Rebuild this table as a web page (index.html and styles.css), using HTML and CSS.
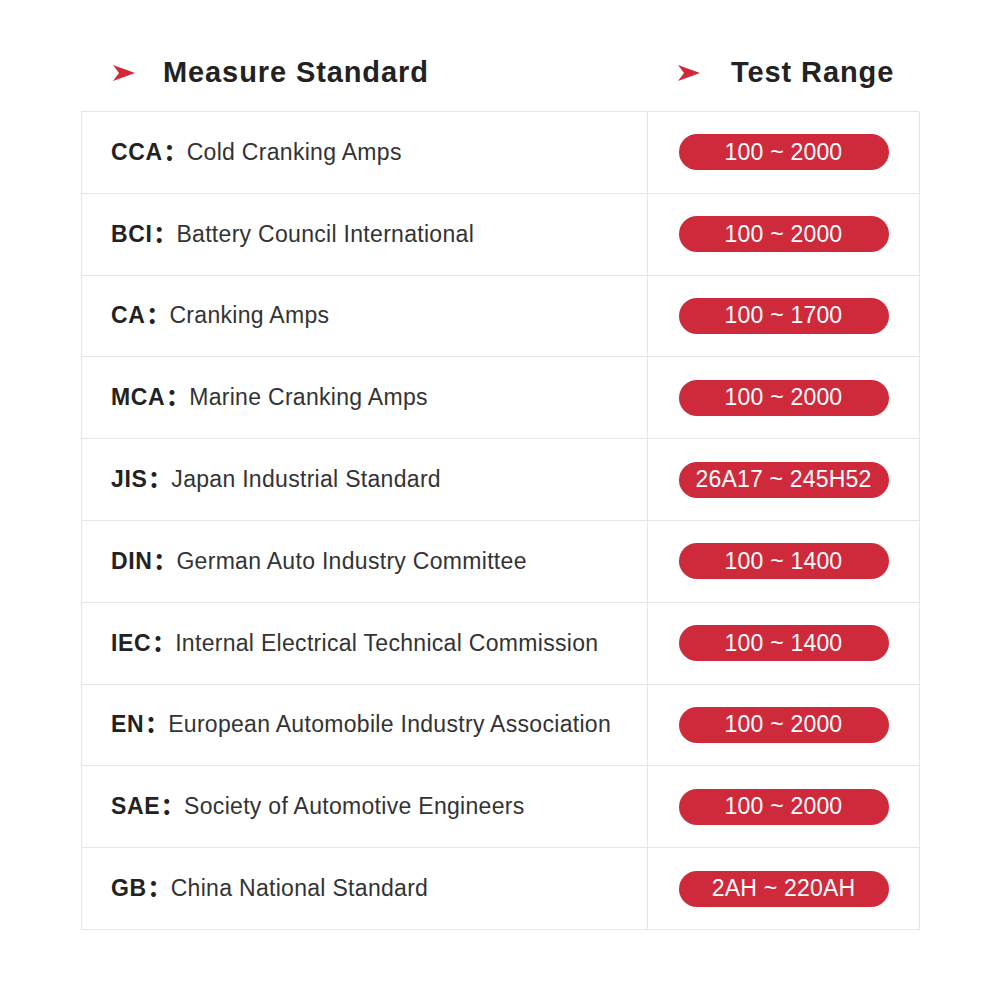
FILE: index.html
```html
<!DOCTYPE html>
<html>
<head>
<meta charset="utf-8">
<link rel="stylesheet" href="styles.css">
</head>
<body>
<div class="wrap">
  <div class="head">
    <div class="hcell hleft">
      <svg class="arrow" width="22" height="16" viewBox="0 0 22 16"><polygon points="0,0 22,8 0,16 6,8" fill="#d3283a"/></svg>
      <span class="htext">Measure Standard</span>
    </div>
    <div class="hcell hright">
      <svg class="arrow" width="22" height="16" viewBox="0 0 22 16"><polygon points="0,0 22,8 0,16 6,8" fill="#d3283a"/></svg>
      <span class="htext">Test Range</span>
    </div>
  </div>
  <div class="table">
    <div class="cell name"><span class="lbl"><b>CCA<i>：</i></b>Cold Cranking Amps</span></div><div class="cell range"><span class="pill">100 ~ 2000</span></div>
    <div class="cell name"><span class="lbl"><b>BCI<i>：</i></b>Battery Council International</span></div><div class="cell range"><span class="pill">100 ~ 2000</span></div>
    <div class="cell name"><span class="lbl"><b>CA<i>：</i></b>Cranking Amps</span></div><div class="cell range"><span class="pill">100 ~ 1700</span></div>
    <div class="cell name"><span class="lbl"><b>MCA<i>：</i></b>Marine Cranking Amps</span></div><div class="cell range"><span class="pill">100 ~ 2000</span></div>
    <div class="cell name"><span class="lbl"><b>JIS<i>：</i></b>Japan Industrial Standard</span></div><div class="cell range"><span class="pill">26A17 ~ 245H52</span></div>
    <div class="cell name"><span class="lbl"><b>DIN<i>：</i></b>German Auto Industry Committee</span></div><div class="cell range"><span class="pill">100 ~ 1400</span></div>
    <div class="cell name"><span class="lbl"><b>IEC<i>：</i></b>Internal Electrical Technical Commission</span></div><div class="cell range"><span class="pill">100 ~ 1400</span></div>
    <div class="cell name"><span class="lbl"><b>EN<i>：</i></b>European Automobile Industry Association</span></div><div class="cell range"><span class="pill">100 ~ 2000</span></div>
    <div class="cell name"><span class="lbl"><b>SAE<i>：</i></b>Society of Automotive Engineers</span></div><div class="cell range"><span class="pill">100 ~ 2000</span></div>
    <div class="cell name"><span class="lbl"><b>GB<i>：</i></b>China National Standard</span></div><div class="cell range"><span class="pill">2AH ~ 220AH</span></div>
  </div>
</div>
</body>
</html>
```
FILE: styles.css
```css
html, body {
  margin: 0;
  padding: 0;
  background: #ffffff;
}
body {
  font-family: "Liberation Sans", Arial, sans-serif;
  color: #2a2a2a;
}
.wrap {
  width: 838px;
  margin-left: 81px;
  padding-top: 50px;
}
.head {
  display: grid;
  grid-template-columns: 566px 272px;
  height: 61px;
}
.hcell {
  display: flex;
  align-items: flex-start;
  padding-top: 5px;
}
.hleft { padding-left: 32px; }
.hright { padding-left: 31px; }
.arrow {
  margin-top: 10px;
  margin-right: 28px;
  flex: none;
}
.hright .arrow { margin-right: 31px; }
.htext {
  font-size: 29px;
  font-weight: bold;
  color: #222;
  line-height: 34px;
  letter-spacing: 0.9px;
}
.table {
  display: grid;
  grid-template-columns: 566px 272px;
  border-top: 1px solid #e6e6e6;
  border-left: 1px solid #e6e6e6;
  width: 838px;
  box-sizing: border-box;
}
.cell {
  height: 81.8px;
  box-sizing: border-box;
  border-right: 1px solid #e6e6e6;
  border-bottom: 1px solid #e6e6e6;
  display: flex;
  align-items: center;
}
.name {
  padding-left: 29px;
  font-size: 23px;
  color: #333;
  padding-bottom: 1px;
  letter-spacing: 0.3px;
  white-space: nowrap;
}
.lbl {
  line-height: 28px;
  height: 28px;
  display: block;
}
.name b {
  color: #222;
  font-weight: bold;
  letter-spacing: 0.6px;
}
.name i {
  font-style: normal;
  font-family: "Noto Sans CJK SC", sans-serif;
  font-weight: 900;
  font-size: 23px;
  line-height: 10px;
  letter-spacing: 0;
  margin-left: 1px;
}
.range {
  justify-content: center;
}
.pill {
  display: flex;
  align-items: center;
  justify-content: center;
  width: 210px;
  height: 36px;
  border-radius: 18px;
  background: #cf2a3b;
  color: #fff;
  font-size: 23px;
  letter-spacing: 0.2px;
}
```
